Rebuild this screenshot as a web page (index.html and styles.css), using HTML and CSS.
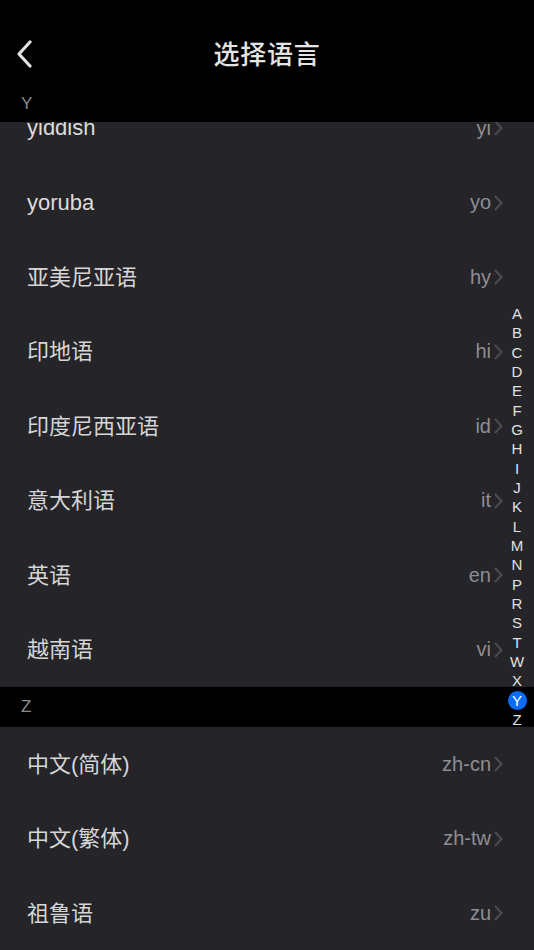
FILE: index.html
```html
<!DOCTYPE html>
<html lang="zh-CN">
<head>
  <meta charset="UTF-8">
  <title>选择语言</title>
  <link rel="stylesheet" href="styles.css">
</head>
<body>

  <header class="navbar">
    <span class="back">
      <svg width="18" height="28" viewBox="0 0 18 28"><path d="M14 2 L3 14 L14 26" fill="none" stroke="#e2e2e2" stroke-width="3.2" stroke-linecap="round" stroke-linejoin="round"/></svg>
    </span>
    <h1>选择语言</h1>
  </header>

  <main class="list-area">
    <div class="section-title sticky">Y</div>
    <div class="scroller">
      <div class="rows">
        <div class="row first"><span class="name">yiddish</span><span class="code">yi</span><svg class="chev" width="10" height="16" viewBox="0 0 10 16"><path d="M2 1 L8.5 8 L2 15"/></svg></div>
        <div class="row"><span class="name">yoruba</span><span class="code">yo</span><svg class="chev" width="10" height="16" viewBox="0 0 10 16"><path d="M2 1 L8.5 8 L2 15"/></svg></div>
        <div class="row"><span class="name zh">亚美尼亚语</span><span class="code">hy</span><svg class="chev" width="10" height="16" viewBox="0 0 10 16"><path d="M2 1 L8.5 8 L2 15"/></svg></div>
        <div class="row"><span class="name zh">印地语</span><span class="code">hi</span><svg class="chev" width="10" height="16" viewBox="0 0 10 16"><path d="M2 1 L8.5 8 L2 15"/></svg></div>
        <div class="row"><span class="name zh">印度尼西亚语</span><span class="code">id</span><svg class="chev" width="10" height="16" viewBox="0 0 10 16"><path d="M2 1 L8.5 8 L2 15"/></svg></div>
        <div class="row"><span class="name zh">意大利语</span><span class="code">it</span><svg class="chev" width="10" height="16" viewBox="0 0 10 16"><path d="M2 1 L8.5 8 L2 15"/></svg></div>
        <div class="row"><span class="name zh">英语</span><span class="code">en</span><svg class="chev" width="10" height="16" viewBox="0 0 10 16"><path d="M2 1 L8.5 8 L2 15"/></svg></div>
        <div class="row"><span class="name zh">越南语</span><span class="code">vi</span><svg class="chev" width="10" height="16" viewBox="0 0 10 16"><path d="M2 1 L8.5 8 L2 15"/></svg></div>
        <div class="section-title">Z</div>
        <div class="row"><span class="name zh">中文(简体)</span><span class="code">zh-cn</span><svg class="chev" width="10" height="16" viewBox="0 0 10 16"><path d="M2 1 L8.5 8 L2 15"/></svg></div>
        <div class="row"><span class="name zh">中文(繁体)</span><span class="code">zh-tw</span><svg class="chev" width="10" height="16" viewBox="0 0 10 16"><path d="M2 1 L8.5 8 L2 15"/></svg></div>
        <div class="row"><span class="name zh">祖鲁语</span><span class="code">zu</span><svg class="chev" width="10" height="16" viewBox="0 0 10 16"><path d="M2 1 L8.5 8 L2 15"/></svg></div>
      </div>
    </div>

    <ul class="index-bar">
      <li>A</li><li>B</li><li>C</li><li>D</li><li>E</li><li>F</li><li>G</li><li>H</li>
      <li>I</li><li>J</li><li>K</li><li>L</li><li>M</li><li>N</li><li>P</li><li>R</li>
      <li>S</li><li>T</li><li>W</li><li>X</li><li class="active">Y</li><li>Z</li>
    </ul>
  </main>

</body>
</html>
```

FILE: styles.css
```css
body {
  margin: 0;
  padding: 0;
  width: 534px;
  height: 950px;
  overflow: hidden;
  background-color: #242429;
  font-family: 'Liberation Sans', 'Noto Sans CJK SC', sans-serif;
  color: #dedede;
}

.navbar {
  height: 88px;
  background-color: #000;
  display: flex;
  align-items: center;
  justify-content: center;
  position: relative;
}

.navbar h1 {
  margin: 16px 0 0 0;
  font-family: 'Noto Sans CJK SC', sans-serif;
  font-size: 26px;
  font-weight: 500;
  color: #e4e4e4;
  letter-spacing: 0.7px;
}

.back {
  position: absolute;
  left: 16px;
  top: 40px;
  height: 28px;
}

.list-area {
  position: relative;
  height: 862px;
  display: flex;
  flex-direction: column;
}

.section-title {
  background-color: #000;
  color: #8a8a8a;
  font-size: 17px;
  height: 40px;
  line-height: 40px;
  padding-left: 21px;
}

.section-title.sticky {
  height: 34px;
  line-height: 32px;
}

.scroller {
  flex: 1;
  overflow: hidden;
}

.rows {
  margin-top: -31px;
}

.row {
  height: 74.5px;
  display: flex;
  align-items: center;
  padding: 0 31px 0 27px;
}

.row .name {
  flex: 1;
  font-size: 22px;
  color: #dcdcdc;
}

.row .name.zh {
  padding-bottom: 5px;
  color: #d6d6d6;
}

.row .code {
  font-size: 20px;
  color: #8e8e93;
}

.chev {
  margin-left: 2px;
  fill: none;
  stroke: #4c4c52;
  stroke-width: 2;
}

.index-bar {
  position: absolute;
  right: 6px;
  top: 216px;
  margin: 0;
  padding: 0;
  list-style: none;
  width: 22px;
  font-size: 15px;
  color: #e0e0e0;
  text-align: center;
}

.index-bar li {
  height: 19.33px;
  line-height: 19.33px;
}

.index-bar li.active {
  width: 19px;
  height: 19px;
  line-height: 19px;
  margin: 0 auto 0.33px;
  border-radius: 50%;
  background-color: #0a6cf5;
  color: #fff;
}
```
